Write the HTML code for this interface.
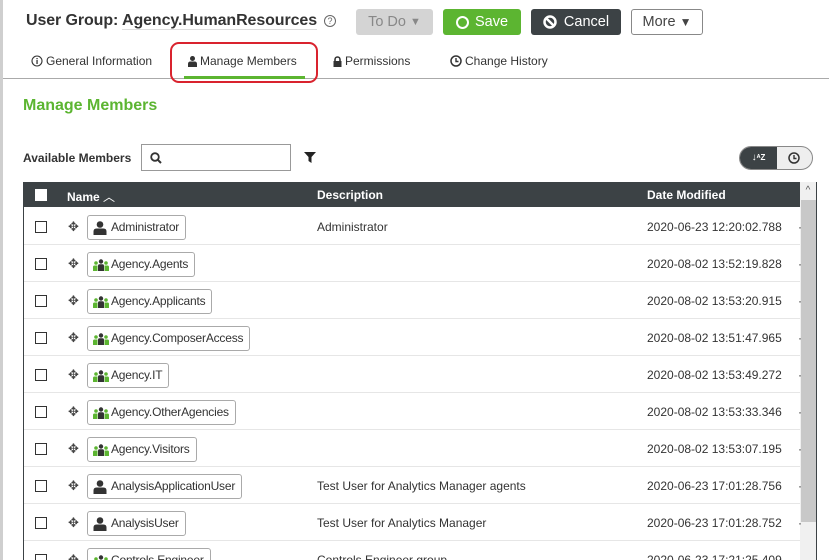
<!DOCTYPE html>
<html><head><style>
*{box-sizing:border-box;margin:0;padding:0}
html,body{width:829px;height:560px;overflow:hidden}
body{background:#fff;font-family:"Liberation Sans",sans-serif;color:#333;position:relative}
.a{position:absolute}
.btn{position:absolute;top:9px;height:26px;border-radius:3px;font-size:14.5px;display:flex;align-items:center;justify-content:center}
.tab{position:absolute;top:54px;font-size:12px;color:#333;display:flex;align-items:center;gap:3px}
.row{position:absolute;left:24px;width:776px;height:37px;border-bottom:1px solid #e6e6e6;font-size:12px}
.cb{position:absolute;left:11px;top:13px;width:12px;height:12px;border:1px solid #333;background:#fff}
.mv{position:absolute;left:44px;top:11px;font-size:13px;color:#444}
.chip{position:absolute;left:63px;top:7px;height:25px;border:1px solid #aaa;border-radius:3px;padding:0 6px 0 23px;line-height:23px;font-size:12px;color:#333;background:#fff;letter-spacing:-0.2px}
.chip svg{position:absolute;left:5px;top:5px}
.desc{position:absolute;left:293px;top:12px}
.dt{position:absolute;left:623px;top:12px}
.dot{position:absolute;left:774px;top:12px}
</style></head><body>
<div class="a" style="left:0;top:0;width:3px;height:560px;background:#cfcfcf"></div>
<div class="a" style="left:26px;top:12px;font-size:16px;font-weight:bold;color:#333;letter-spacing:-0.1px">User Group: <span style="border-bottom:1px solid #ddd">Agency.HumanResources</span></div>
<div class="a" style="left:324px;top:15px;width:12px;height:12px;border:1px solid #666;border-radius:50%;font-size:9px;line-height:10px;text-align:center;color:#666">?</div>
<div class="btn" style="left:356px;width:77px;background:#d4d4d4;color:#888">To Do&nbsp;<span style="font-size:11px">▼</span></div>
<div class="btn" style="left:443px;width:78px;background:#5cb531;color:#fff"><span style="display:inline-block;width:13px;height:13px;border:2.5px solid #fff;border-radius:50%;margin-right:6px"></span>Save</div>
<div class="btn" style="left:531px;width:90px;background:#3c4245;color:#fff"><svg width="14" height="14" viewBox="0 0 14 14" style="margin-right:7px"><circle cx="7" cy="7" r="5.5" fill="none" stroke="#fff" stroke-width="2.5"/><line x1="3" y1="3" x2="11" y2="11" stroke="#fff" stroke-width="2.5"/></svg>Cancel</div>
<div class="btn" style="left:631px;width:72px;border:1px solid #888;color:#444">More&nbsp;<span style="font-size:12px">▼</span></div>
<div class="tab" style="left:31px"><svg width="12" height="12" viewBox="0 0 12 12"><circle cx="6" cy="6" r="5" fill="none" stroke="#333" stroke-width="1.1"/><rect x="5.4" y="5" width="1.3" height="4" fill="#333"/><rect x="5.4" y="3" width="1.3" height="1.2" fill="#333"/></svg>General Information</div>
<div class="tab" style="left:188px"><svg width="9" height="11" viewBox="0 0 9 11"><circle cx="4.5" cy="2.5" r="2.5" fill="#333"/><path d="M0 11V8Q0 5.5 2.5 5.5H6.5Q9 5.5 9 8V11Z" fill="#333"/></svg>Manage Members</div>
<div class="tab" style="left:333px"><svg width="9" height="11" viewBox="0 0 9 11"><path d="M2 5V3.5a2.5 2.5 0 0 1 5 0V5" fill="none" stroke="#333" stroke-width="1.6"/><rect x="0.5" y="5" width="8" height="6" fill="#333"/></svg>Permissions</div>
<div class="tab" style="left:450px"><svg width="12" height="12" viewBox="0 0 12 12"><circle cx="6" cy="6" r="5" fill="none" stroke="#333" stroke-width="1.5"/><path d="M6 3V6.5H8.5" fill="none" stroke="#333" stroke-width="1.4"/></svg>Change History</div>
<div class="a" style="left:3px;top:78px;width:826px;height:1px;background:#aaa"></div>
<div class="a" style="left:184px;top:76px;width:121px;height:3px;background:#5cb531"></div>
<div class="a" style="left:170px;top:42px;width:148px;height:41px;border:2px solid #d9232e;border-radius:9px"></div>
<div class="a" style="left:23px;top:97px;font-size:16px;font-weight:bold;color:#5cb531">Manage Members</div>
<div class="a" style="left:23px;top:151px;font-size:12px;font-weight:bold;color:#333">Available Members</div>
<div class="a" style="left:141px;top:144px;width:150px;height:27px;border:1px solid #999"><svg width="12" height="12" viewBox="0 0 12 12" class="a" style="left:8px;top:7px"><circle cx="5" cy="5" r="3.8" fill="none" stroke="#333" stroke-width="1.8"/><line x1="7.8" y1="7.8" x2="11" y2="11" stroke="#333" stroke-width="2"/></svg></div>
<svg class="a" style="left:304px;top:152px" width="12" height="11" viewBox="0 0 12 11"><path d="M0 0H12L7.5 5V11L4.5 9V5Z" fill="#222"/></svg>
<div class="a" style="left:739px;top:146px;width:74px;height:24px;border:1px solid #888;border-radius:12px;background:#eee;overflow:hidden"><div class="a" style="left:0;top:0;width:37px;height:22px;background:#3c4245;color:#fff;font-size:10px;font-weight:bold;line-height:22px;text-align:center">↓<span style="font-size:8px">ᴬZ</span></div><svg class="a" style="left:48px;top:5px" width="12" height="12" viewBox="0 0 12 12"><circle cx="6" cy="6" r="5" fill="none" stroke="#333" stroke-width="1.5"/><path d="M6 3V6.5H8.5" fill="none" stroke="#333" stroke-width="1.4"/></svg></div>
<div class="a" style="left:23px;top:182px;width:794px;height:378px;border:1px solid #3c4245;border-bottom:none"></div>
<div class="a" style="left:24px;top:182px;width:776px;height:25px;background:#3c4245;color:#fff;font-size:12px;font-weight:bold">
<div class="a" style="left:11px;top:7px;width:12px;height:12px;background:#fff"></div>
<div class="a" style="left:43px;top:6px">Name <span style="font-weight:normal">︿</span></div>
<div class="a" style="left:293px;top:6px">Description</div>
<div class="a" style="left:623px;top:6px">Date Modified</div>
</div>
<div class="a" style="left:800px;top:182px;width:16px;height:378px;background:#f0f0f0"></div>
<div class="a" style="left:800px;top:182px;width:16px;height:17px;background:#f0f0f0;font-size:10px;text-align:center;line-height:17px;color:#555">^</div>
<div class="a" style="left:801px;top:200px;width:15px;height:322px;background:#c8c8c8"></div>
<div id="rows"></div>
<script>
var user='<svg width="14" height="14" viewBox="0 0 14 14"><circle cx="7" cy="3.5" r="3.3" fill="#333"/><path d="M0.5 14V10.5Q0.5 7.5 3.5 7.5H10.5Q13.5 7.5 13.5 10.5V14Z" fill="#333"/></svg>';
var grp='<svg width="16" height="13" viewBox="0 0 16 13" style="top:6px"><circle cx="3" cy="4" r="1.8" fill="#5cb531"/><circle cx="13" cy="4" r="1.8" fill="#5cb531"/><circle cx="8" cy="2.5" r="2.2" fill="#333"/><path d="M0 12V8Q0 6.5 1.5 6.5H4.5V12Z M16 12V8Q16 6.5 14.5 6.5H11.5V12Z" fill="#5cb531"/><path d="M5 12V7Q5 5.3 6.5 5.3H9.5Q11 5.3 11 7V12Z" fill="#333"/></svg>';
var d=[['Administrator',1,'Administrator','2020-06-23 12:20:02.788'],['Agency.Agents',0,'','2020-08-02 13:52:19.828'],['Agency.Applicants',0,'','2020-08-02 13:53:20.915'],['Agency.ComposerAccess',0,'','2020-08-02 13:51:47.965'],['Agency.IT',0,'','2020-08-02 13:53:49.272'],['Agency.OtherAgencies',0,'','2020-08-02 13:53:33.346'],['Agency.Visitors',0,'','2020-08-02 13:53:07.195'],['AnalysisApplicationUser',1,'Test User for Analytics Manager agents','2020-06-23 17:01:28.756'],['AnalysisUser',1,'Test User for Analytics Manager','2020-06-23 17:01:28.752'],['Controls.Engineer',0,'Controls Engineer group','2020-06-23 17:21:25.409']];
var h='';d.forEach(function(r,i){h+='<div class="row" style="top:'+(208+i*37)+'px"><div class="cb"></div><div class="mv">✥</div><div class="chip">'+(r[1]?user:grp)+r[0]+'</div><div class="desc">'+r[2]+'</div><div class="dt">'+r[3]+'</div><div class="dot">·</div></div>'});
document.getElementById('rows').innerHTML=h;
</script>
</body></html>
